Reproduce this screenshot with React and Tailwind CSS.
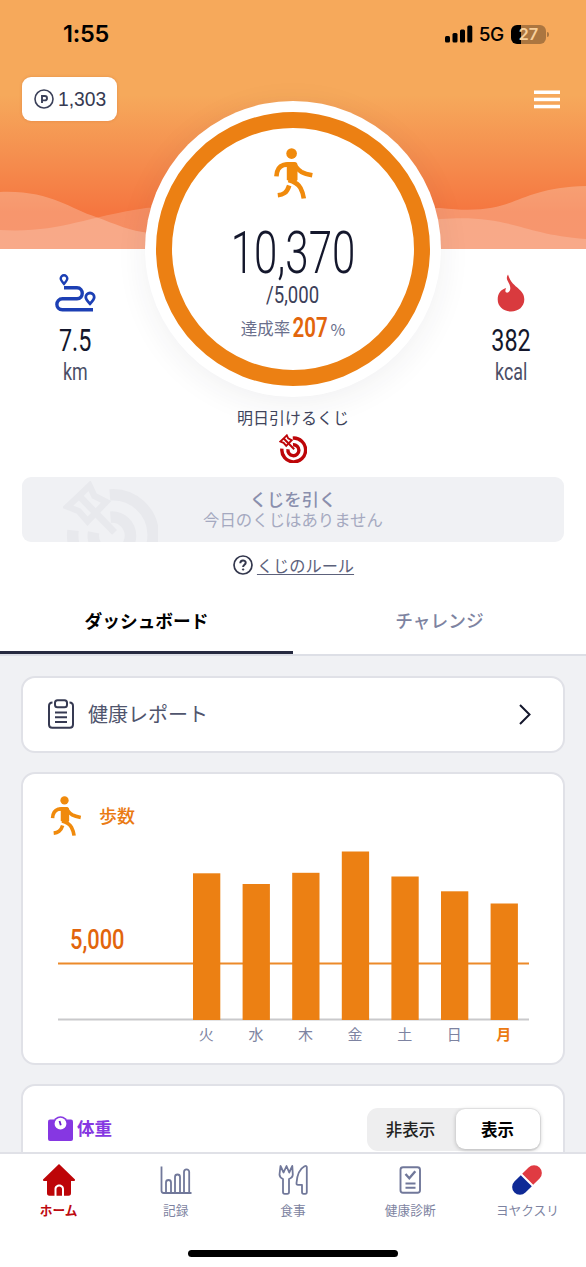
import React from "react";

function Narrow({ className = "", children }) {
  return (
    <span className={"inline-block whitespace-nowrap font-['Roboto',sans-serif] " + className}>
      {children}
    </span>
  );
}

function Walker({ className }) {
  return (
    <svg className={className} viewBox="0 0 39 51" fill="none" stroke="#f08a0c" strokeWidth="4.6">
      <circle cx="17.6" cy="5.6" r="5.3" fill="#f08a0c" stroke="none" />
      <path d="M10 15l4-1h6.500c1.800 0 3 1.200 3 3V32l-3 3-7.700-3V16z" fill="#f08a0c" stroke="none" />
      <path d="M2.400 28.300c.3-6 2.800-10 7.100-11.300 2.500-.8 6-.7 10-.6" />
      <path d="M19.500 16c2.300 2.500 3.600 5.500 8 8 2.800 1.500 6.500 2.500 10.800 3.300" />
      <path d="M14.500 32c5 1.500 9.500 3.300 12 8 1.700 3.200 2.800 6.500 3.300 10.500" />
      <path d="M15.200 37.500c-1 3.300-2.300 5.800-4.600 7.500-1.800 1.300-4 2-6.800 2.300" />
    </svg>
  );
}

function Dart({ className }) {
  return (
    <svg className={className} viewBox="0 0 28 29" fill="none" stroke="currentColor">
      <path d="M13.800 4.100A11.900 11.900 0 1 1 2.900 14.600" strokeWidth="3.400" />
      <path d="M14 10.700A5.500 5.500 0 1 1 9 15.200" strokeWidth="3.400" />
      <path d="M7.800 1.400L9.200 4.400 12.700 6.200 7.200 11.900 4.600 8.900 1.300 7.600 4.700 4.400z" strokeWidth="1.900" />
      <path d="M4.500 4.200L15.200 15.200" strokeWidth="2" />
    </svg>
  );
}

function StatusBar() {
  return (
    <div className="flex h-[68px] items-center justify-between pl-[63px] pr-[37px] text-black">
      <span className="font-['Inter',sans-serif] text-[23.5px] font-semibold leading-none tracking-[-0.2px]">1:55</span>
      <div className="flex items-center">
        <svg className="h-[18px] w-[28px]" viewBox="0 0 28 18">
          <rect x="0" y="11" width="5" height="6.500" rx="1.500" />
          <rect x="7.500" y="8" width="5" height="9.500" rx="1.500" />
          <rect x="15" y="4.500" width="5" height="13" rx="1.500" />
          <rect x="22.300" y="0.500" width="5" height="17" rx="1.500" />
        </svg>
        <span className="ml-[6px] font-['Inter',sans-serif] text-[19px] font-medium leading-none tracking-[-0.3px]">5G</span>
        <div className="ml-[7px] flex h-[19px] w-[35px] items-center justify-center rounded-[6px] bg-[linear-gradient(90deg,#000_0_10px,#ab7640_10px)]">
          <span className="font-['Inter',sans-serif] text-[16.500px] font-semibold leading-none text-[#f8cf9a]">27</span>
        </div>
        <div className="ml-px h-[5px] w-[2px] rounded-r bg-[#ab7640]" />
      </div>
    </div>
  );
}

function HeroBackdrop() {
  return (
    <div className="col-start-1 row-start-1 h-[249px] bg-[linear-gradient(180deg,#f6a95b_0,#f6a95b_95px,#f58d4e_160px,#f57640_212px,#f57542_249px)]">
      <svg className="block h-[249px] w-[586px]" viewBox="0 0 586 249" fill="#fff">
        <path fillOpacity=".24" d="M0 192C50 190 70 209 96 217 115 224 130 231 150 233 250 240 350 208 440 208 520 217 510 188 586 186V249H0z" />
        <path fillOpacity=".18" d="M0 230C60 233 80 218 146 208 220 200 300 222 340 226 380 230 410 219 440 219 510 214 520 234 586 239V249H0z" />
      </svg>
    </div>
  );
}

function Metric({ icon, value, unit, className }) {
  return (
    <div className={"flex w-[145px] flex-col items-center pt-[173px] " + className}>
      {icon}
      <Narrow className="mt-[13px] h-[30px] scale-x-[.73] text-[32px] leading-[31px] text-[#14172c]">{value}</Narrow>
      <Narrow className="mt-[3px] h-[26px] scale-x-[.76] text-[23.500px] leading-[28px] text-[#4a4e66]">{unit}</Narrow>
    </div>
  );
}

function RouteIcon() {
  return (
    <svg className="h-[38px] w-[41px]" viewBox="0 0 41 38" fill="none" stroke="#1c3fb4" strokeWidth="3.400">
      <path d="M9 13.800h13c7 0 7 11 0 11H7.500c-7.500 0-7.500 11 0 11H38" />
      <path d="M9 9.300C6.500 6.500 5.700 5.500 5.700 4a3.300 3.300 0 0 1 6.600 0C12.300 5.500 11.500 6.500 9 9.300z" strokeWidth="2.400" transform="translate(0 .6)" />
      <path d="M35 29.800c-3.200-3.500-4.200-5-4.200-6.600a4.200 4.200 0 0 1 8.400 0c0 1.600-1 3.100-4.200 6.600z" strokeWidth="2.800" />
    </svg>
  );
}

function FlameIcon() {
  return (
    <svg className="h-[38px] w-[28px]" viewBox="0 0 28 38">
      <path d="M11 .5C9.300 3 9.500 5.200 11 7.500c1 2 2.200 4 2.300 6.500.1 3-2 5-3.800 4.600-1.600-.4-1.300-2.600-.4-4.600C3.500 15.500.7 20 .7 25.500.7 32.500 6.500 37.500 14 37.500s13.300-5 13.300-12c0-5-2.600-8-6-11C18 11.500 13.500 8.500 11 .5z" fill="#d93a3e" />
    </svg>
  );
}

function StepRing() {
  return (
    <div className="flex h-[296px] w-[296px] items-center justify-center rounded-full bg-white shadow-[0_6px_32px_rgba(40,40,60,0.07)]">
      <div className="flex h-[274px] w-[274px] flex-col items-center rounded-full border-[16px] border-[#ec8013] pt-[20px]">
        <Walker className="h-[51px] w-[39px]" />
        <Narrow className="mt-[27px] h-[57px] scale-x-[.7] text-[60px] font-light leading-[54px] text-[#14172c]">10,370</Narrow>
        <Narrow className="h-[24px] scale-x-[.79] text-[23.500px] leading-[24px] text-[#3c4059]">/5,000</Narrow>
        <div className="mt-[6px] flex h-[30px] items-center justify-center text-[16.500px] leading-[30px] text-[#6a6f8c]">
          <span>達成率</span>
          <Narrow className="mx-[-3px] scale-x-[.76] text-[27px] font-semibold leading-[30px] text-[#e2650c]">207</Narrow>
          <span className="pt-[2px] text-[16px]">%</span>
        </div>
      </div>
    </div>
  );
}

function Hero() {
  return (
    <div className="grid shrink-0 grid-cols-[586px] bg-white">
      <HeroBackdrop />
      <div className="col-start-1 row-start-1 flex flex-col">
        <StatusBar />
        <div className="mt-[9px] flex h-[44px] items-center justify-between pl-[22px] pr-[26px]">
          <div className="flex h-[44px] w-[95px] items-center rounded-[9px] bg-white pl-[12px] shadow-[0_0_3px_rgba(180,80,20,0.3)]">
            <svg className="h-[20px] w-[20px]" viewBox="0 0 20 20" fill="none" stroke="#3b4059">
              <circle cx="10" cy="10" r="9" strokeWidth="1.600" />
              <path d="M8 14V7h2.800a2.200 2.200 0 0 1 0 4.400H8" strokeWidth="1.900" />
            </svg>
            <span className="ml-[4px] pt-[2px] font-['Liberation_Sans',sans-serif] text-[19.300px] leading-none text-[#363a52]">1,303</span>
          </div>
          <svg className="h-[19px] w-[26px]" viewBox="0 0 26 19" fill="#fff">
            <rect y="0.500" width="26" height="3.500" />
            <rect y="7.700" width="26" height="3.500" />
            <rect y="14.800" width="26" height="3.500" />
          </svg>
        </div>
        <div className="-mt-[20px] flex h-[296px]">
          <Metric className="pl-[5px]" icon={<RouteIcon />} value="7.5" unit="km" />
          <StepRing />
          <Metric className="pr-[5px]" icon={<FlameIcon />} value="382" unit="kcal" />
        </div>
        <p className="mt-[10px] h-[21px] text-center text-[16px] leading-[20px] text-[#40445b]">明日引けるくじ</p>
        <Dart className="mt-[6px] h-[29px] w-[28px] self-center text-[#bd0508]" />
        <div className="mx-[22px] mt-[14px] grid h-[65px] grid-cols-[542px] overflow-hidden rounded-[9px] bg-[#f0f1f4]">
          <Dart className="col-start-1 row-start-1 ml-[41px] mt-[4px] h-[98px] w-[95px] text-[#e8e9ed]" />
          <div className="col-start-1 row-start-1 flex flex-col items-center pt-[11px]">
            <span className="h-[21px] text-[17.300px] font-medium leading-[21px] text-[#8a8fad]">くじを引く</span>
            <span className="h-[21px] text-[16.400px] leading-[21px] text-[#a5a9c0]">今日のくじはありません</span>
          </div>
        </div>
        <div className="mt-[12px] flex h-[22px] items-center justify-center gap-[4px] pl-px">
          <svg className="h-[20px] w-[20px]" viewBox="0 0 20 20" fill="none" stroke="#33374d">
            <circle cx="10" cy="10" r="9" strokeWidth="1.700" />
            <path d="M7.300 8.200c0-3.600 5.400-3.500 5.400-.5 0 2-2.600 2-2.600 4.200" strokeWidth="2" />
            <circle cx="10.100" cy="14.500" r=".7" strokeWidth="1" fill="#33374d" />
          </svg>
          <span className="text-[16.200px] leading-[21px] text-[#5c617b] underline decoration-1 underline-offset-2">くじのルール</span>
        </div>
        <div className="mt-[10px] flex h-[70px] text-[17.700px] font-medium leading-[20px]">
          <div className="flex w-[293px] items-center justify-center border-b-2 border-[#dddfe6] text-black shadow-[inset_0_-3px_0_#262a40]">
            <span className="font-bold">ダッシュボード</span>
          </div>
          <div className="flex w-[293px] items-center justify-center border-b-2 border-[#dddfe6] text-[#7d83a1]">チャレンジ</div>
        </div>
      </div>
    </div>
  );
}

const steps = [
  { day: "火", h: 146.7 },
  { day: "水", h: 136 },
  { day: "木", h: 147.2 },
  { day: "金", h: 168.5 },
  { day: "土", h: 143.5 },
  { day: "日", h: 128.7 },
  { day: "月", h: 116.5 },
];

function ReportCard() {
  return (
    <div className="flex h-[77px] shrink-0 items-center rounded-[14px] border-2 border-[#e0e1e7] bg-white pl-[25px] pr-[32px]">
      <svg className="h-[30px] w-[26px]" viewBox="0 0 26 30" fill="none" stroke="#363a52" strokeWidth="2">
        <path d="M4.500 3.500C2 3.500 1 4.500 1 7v18.500c0 2.200 1 3.200 3.200 3.200h17.600c2.200 0 3.200-1 3.200-3.200V7c0-2.500-1-3.500-3.500-3.500" />
        <rect x="7" y="1.200" width="12" height="7" rx="2.500" />
        <path d="M7 13.500h12M7 18.300h12M7 23h12" />
      </svg>
      <span className="ml-[14px] flex-1 text-[20px] leading-none text-[#50556d]">健康レポート</span>
      <svg className="h-[21px] w-[12px]" viewBox="0 0 12 21" fill="none" stroke="#14172c" strokeWidth="2">
        <path d="M1 1l9.500 9.500L1 20" />
      </svg>
    </div>
  );
}

function StepsCard() {
  return (
    <div className="h-[293px] shrink-0 rounded-[14px] border-2 border-[#e0e1e7] bg-white pl-[27px] pr-[25px] pt-[22px]">
      <div className="flex h-[40px] items-center">
        <Walker className="h-[40px] w-[32px]" />
        <span className="ml-[17px] pb-[2px] text-[18px] font-medium leading-none text-[#ea7a12]">歩数</span>
      </div>
      <div className="ml-[8px] mt-[15px] grid h-[170px] w-[471px] grid-cols-[471px]">
        <svg className="col-start-1 row-start-1 h-[170px] w-[471px]" viewBox="0 0 471 170">
          <rect y="111.500" width="471" height="2" fill="#ec8a2a" />
          <rect y="167.500" width="471" height="2" fill="#c9c9cb" />
          {steps.map((s, i) => (
            <rect key={s.day} x={135 + i * 49.6} y={169 - s.h} width="27.300" height={s.h} fill="#ec8013" />
          ))}
        </svg>
        <Narrow className="col-start-1 row-start-1 ml-[12px] mt-[74px] h-[30px] origin-left scale-x-[.78] justify-self-start text-[28px] font-medium leading-[30px] text-[#e2650c]">
          5,000
        </Narrow>
      </div>
      <div className="-mr-[25px] ml-[131.500px] flex h-[28px] items-center">
        {steps.map((s) => (
          <span key={s.day} className={s.day === "月" ? "w-[49.600px] shrink-0 text-center text-[15px] font-bold text-[#ec7a12]" : "w-[49.600px] shrink-0 text-center text-[15px] text-[#7d83a1]"}>
            {s.day}
          </span>
        ))}
      </div>
    </div>
  );
}

function WeightCard() {
  return (
    <div className="h-[120px] shrink-0 rounded-[14px] border-2 border-[#e0e1e7] bg-white pl-[25px] pr-[22px] pt-[22px]">
      <div className="flex h-[43px] items-center">
        <svg className="mb-[2px] h-[25px] w-[25px]" viewBox="0 0 25 25">
          <rect x="0" y="3.500" width="25" height="21.500" rx="2" fill="#8637e2" />
          <circle cx="12.500" cy="7.500" r="7.300" fill="#8637e2" />
          <circle cx="12.500" cy="7.700" r="5.900" fill="#fff" />
          <path d="M11.500 5l1.300 4.300" stroke="#6d1fd0" strokeWidth="1.800" />
        </svg>
        <span className="ml-[4px] flex-1 pb-[2px] text-[17.500px] font-bold leading-none text-[#8637e2]">体重</span>
        <div className="flex h-[43px] w-[174px] items-center rounded-[11px] bg-[#eeeeef] p-[1.500px] text-[16.500px] font-medium leading-none text-[#222]">
          <span className="flex-1 pr-[3px] text-center">非表示</span>
          <span className="flex h-[40px] w-[84px] items-center justify-center rounded-[9px] bg-white font-bold text-black shadow-[0_1px_4px_rgba(0,0,0,0.25)]">表示</span>
        </div>
      </div>
    </div>
  );
}

const tabs = [
  {
    label: "ホーム",
    tone: "text-[#bd0a10] font-bold",
    icon: (
      <svg className="h-[32px] w-[32px]" viewBox="0 0 32 32" fill="#bd0508">
        <path d="M16 0L32 15.500c.4.800 0 1.500-1 1.500h-3v12c0 2-.7 2.700-2.500 2.700H21V25c0-6-9.500-6-9.500 0v6.700H6.500C4.700 31.700 4 31 4 29V17H1c-1 0-1.400-.7-1-1.500z" />
        <path d="M13.500 31.700V25c0-3.500 5.500-3.500 5.500 0v6.700z" />
      </svg>
    ),
  },
  {
    label: "記録",
    tone: "text-[#7d83a1]",
    icon: (
      <svg className="h-[32px] w-[32px]" viewBox="0 0 32 32" fill="none" stroke="#71789a" strokeWidth="1.800">
        <path d="M1.500 2.500v24.300q0 2.200 2.200 2.200H31.500" />
        <path d="M6 29V18.500a2.500 2.500 0 0 1 5 0V29M15 29V13a2.500 2.500 0 0 1 5 0v16M24 29V8a2.600 2.600 0 0 1 5.200 0v21" />
      </svg>
    ),
  },
  {
    label: "食事",
    tone: "text-[#7d83a1]",
    icon: (
      <svg className="h-[32px] w-[32px]" viewBox="0 0 32 32" fill="none" stroke="#71789a" strokeWidth="1.800" strokeLinejoin="round">
        <path d="M3.500 2l-1 8.500c0 2.500 1.500 3.500 3.500 4.500V28c0 1.300.6 1.800 1.700 1.800h2.600c1.100 0 1.700-.5 1.700-1.800V15c2.500-1 3.800-2.300 3.800-4.500L15.300 2l-3.100 6.500L9.500 2 6.600 8.500z" />
        <path d="M29.800 3v25c0 1.200-.5 1.800-1.600 1.800h-1.600c-1.100 0-1.600-.6-1.600-1.800v-7.200h-4c-1.200 0-1.600-.6-1.500-1.800C20 12 22.500 5 27.500 2.300c1.500-.6 2.300-.4 2.300.7z" />
      </svg>
    ),
  },
  {
    label: "健康診断",
    tone: "text-[#7d83a1]",
    icon: (
      <svg className="h-[32px] w-[32px]" viewBox="0 0 32 32" fill="none" stroke="#71789a" strokeWidth="1.900">
        <rect x="6.500" y="3.300" width="19.500" height="25.500" rx="2.500" />
        <path d="M11.500 10l3.800 4.200 6-7" strokeWidth="2.400" />
        <path d="M11.500 19.500h10M11.500 23.800h10" />
      </svg>
    ),
  },
  {
    label: "ヨヤクスリ",
    tone: "text-[#7d83a1]",
    icon: (
      <svg className="h-[32px] w-[32px]" viewBox="0 0 32 32">
        <g transform="translate(16 16) rotate(-45)">
          <path d="M-1-7.800h-9a7.800 7.800 0 0 0 0 15.600H-1z" fill="#0f2a96" />
          <path d="M1-7.800h9a7.800 7.800 0 0 1 0 15.600H1z" fill="#e03b42" />
        </g>
      </svg>
    ),
  },
];

function TabBar() {
  return (
    <nav className="flex h-[115px] shrink-0 flex-col items-center border-t-2 border-[#e0e1e7] bg-white">
      <div className="flex w-full">
        {tabs.map((t) => (
          <div key={t.label} className="flex flex-1 flex-col items-center pt-[10px]">
            {t.icon}
            <span className={"mt-[5px] h-[18px] whitespace-nowrap text-[12.700px] leading-[18px] " + t.tone}>{t.label}</span>
          </div>
        ))}
      </div>
      <div className="mt-[31px] h-[7px] w-[210px] rounded-full bg-black" />
    </nav>
  );
}

export default function App() {
  return (
    <div className="flex h-[1267px] w-[586px] flex-col overflow-hidden bg-white font-['Noto_Sans_CJK_JP',sans-serif]">
      <Hero />
      <main className="flex min-h-0 flex-1 flex-col gap-[19px] overflow-hidden bg-[#f0f1f4] px-[21px] pt-[19.500px]">
        <ReportCard />
        <StepsCard />
        <WeightCard />
      </main>
      <TabBar />
    </div>
  );
}
